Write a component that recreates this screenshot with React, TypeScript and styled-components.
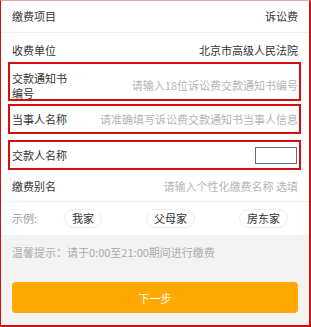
import React from 'react';
import styled, { createGlobalStyle } from 'styled-components';

const RED = '#d40f0f';
const FONT = '"Noto Sans CJK SC", "Noto Sans", sans-serif';

const Global = createGlobalStyle`
  html, body { margin: 0; padding: 0; background: #fff; }
  body { font-family: ${FONT}; }
  * { box-sizing: border-box; }
`;

const Frame = styled.div`
  width: 311px;
  height: 327px;
  border-top: 1px solid #eaa5a5;
  border-left: 1px solid ${RED};
  border-right: 2px solid ${RED};
  border-bottom: 2px solid ${RED};
  display: flex;
  flex-direction: column;
  background: #fff;
  overflow: hidden;
`;

const Row = styled.div<{ $h: number; $pt?: number; $line?: boolean }>`
  height: ${(p) => p.$h}px;
  flex-shrink: 0;
  padding: ${(p) => p.$pt ?? 0}px 11px 0;
  display: flex;
  align-items: center;
  justify-content: space-between;
  border-bottom: ${(p) => (p.$line ? '1px solid #f1f1f1' : 'none')};
`;

const Marked = styled.div<{ $h: number; $mt: number; $pt?: number }>`
  height: ${(p) => p.$h}px;
  flex-shrink: 0;
  margin: ${(p) => p.$mt}px 8px 0 7px;
  border: 2px solid ${RED};
  padding: ${(p) => p.$pt ?? 0}px 1px 0 2px;
  display: flex;
  align-items: center;
  justify-content: space-between;
`;

const Label = styled.div`
  width: 60px;
  flex-shrink: 0;
  font-size: 11px;
  line-height: 15px;
  color: #333;
`;

const Value = styled.div`
  font-size: 11px;
  line-height: 15px;
  color: #333;
  white-space: nowrap;
`;

const Field = styled.input`
  flex: 1;
  min-width: 0;
  border: none;
  outline: none;
  padding: 0;
  margin: 0;
  background: transparent;
  text-align: right;
  font-family: ${FONT};
  font-size: 11px;
  line-height: 15px;
  color: #333;
  &::placeholder {
    color: #b4b4b4;
  }
`;

const SmallBox = styled.input`
  width: 42px;
  height: 17px;
  margin-right: 1px;
  border: 1px solid #5d6f7d;
  border-radius: 0;
  padding: 0 2px;
  outline: none;
  background: #fff;
  font-family: ${FONT};
  font-size: 11px;
`;

const Examples = styled.div`
  height: 33px;
  flex-shrink: 0;
  padding: 0 11px;
  display: flex;
  align-items: center;
`;

const ExampleLabel = styled.div`
  width: 52px;
  flex-shrink: 0;
  font-size: 11px;
  line-height: 15px;
  color: #9a9a9a;
`;

const Chips = styled.div`
  display: flex;
  align-items: center;
`;

const Chip = styled.button`
  height: 19px;
  margin: 0 0 0 44px;
  padding: 0 7px;
  border: 1px solid #ededed;
  border-radius: 10px;
  background: #fff;
  font-family: ${FONT};
  font-size: 11px;
  line-height: 17px;
  color: #333;
  white-space: nowrap;
  &:first-child {
    margin-left: 0;
  }
`;

const Footer = styled.div`
  flex: 1;
  background: #f3f3f3;
  padding: 10px 11px 12px;
  display: flex;
  flex-direction: column;
`;

const Tip = styled.div`
  font-size: 11px;
  line-height: 14px;
  color: #ababab;
`;

const NextButton = styled.button`
  margin-top: auto;
  height: 31px;
  width: 100%;
  border: none;
  border-radius: 4px;
  background: #ffa902;
  color: #fff;
  font-family: ${FONT};
  font-size: 11px;
`;

export default function App() {
  return (
    <>
      <Global />
      <Frame>
        <Row $h={32} $line>
          <Label>缴费项目</Label>
          <Value>诉讼费</Value>
        </Row>
        <Row $h={29} $pt={5}>
          <Label>收费单位</Label>
          <Value>北京市高级人民法院</Value>
        </Row>
        <Marked $h={39} $mt={0} $pt={8}>
          <Label>交款通知书编号</Label>
          <Field placeholder="请输入18位诉讼费交款通知书编号" />
        </Marked>
        <Marked $h={30} $mt={3}>
          <Label>当事人名称</Label>
          <Field placeholder="请准确填写诉讼费交款通知书当事人信息" />
        </Marked>
        <Marked $h={30} $mt={6}>
          <Label>交款人名称</Label>
          <SmallBox />
        </Marked>
        <Row $h={32} $pt={2} $line>
          <Label>缴费别名</Label>
          <Field placeholder="请输入个性化缴费名称 选填" />
        </Row>
        <Examples>
          <ExampleLabel>示例:</ExampleLabel>
          <Chips>
            <Chip>我家</Chip>
            <Chip>父母家</Chip>
            <Chip>房东家</Chip>
          </Chips>
        </Examples>
        <Footer>
          <Tip>温馨提示：请于0:00至21:00期间进行缴费</Tip>
          <NextButton>下一步</NextButton>
        </Footer>
      </Frame>
    </>
  );
}
